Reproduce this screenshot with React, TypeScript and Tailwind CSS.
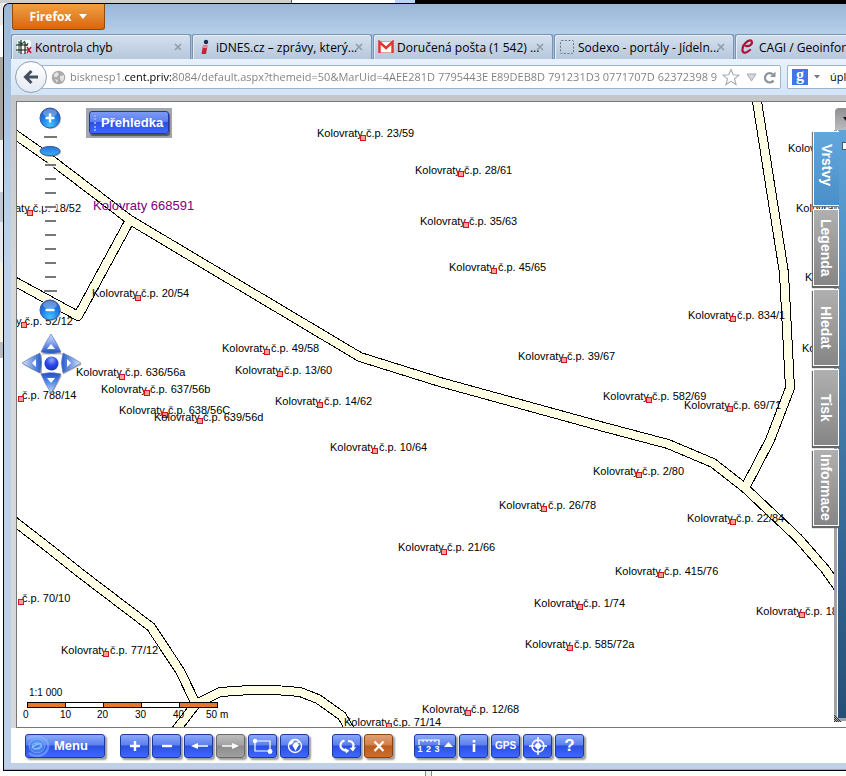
import React from "react";

const ORIGIN = { x: 17, y: 102 };

type Label = { text: string; x: number; y: number; mx?: number; my?: number };

const LABELS: Label[] = [
  { text: "Kolovraty č.p. 23/59", x: 317, y: 133, mx: 363, my: 137 },
  { text: "Kolovraty č.p. 28/61", x: 415, y: 170, mx: 461, my: 173 },
  { text: "Kolovraty č.p. 35/63", x: 420, y: 221, mx: 466, my: 224 },
  { text: "Kolovraty č.p. 45/65", x: 449, y: 267, mx: 494, my: 270 },
  { text: "Kolovraty č.p. 834/1", x: 688, y: 315, mx: 733, my: 318 },
  { text: "Kolovraty č.p. 39/67", x: 518, y: 356, mx: 564, my: 359 },
  { text: "Kolovraty č.p. 49/58", x: 222, y: 348, mx: 267, my: 351 },
  { text: "Kolovraty č.p. 13/60", x: 235, y: 370, mx: 280, my: 373 },
  { text: "Kolovraty č.p. 636/56a", x: 76, y: 372, mx: 122, my: 376 },
  { text: "Kolovraty č.p. 637/56b", x: 101, y: 389, mx: 147, my: 392 },
  { text: "Kolovraty č.p. 638/56C", x: 119, y: 410, mx: 165, my: 414 },
  { text: "Kolovraty č.p. 639/56d", x: 154, y: 417, mx: 200, my: 420 },
  { text: "Kolovraty č.p. 14/62", x: 275, y: 401, mx: 320, my: 404 },
  { text: "Kolovraty č.p. 10/64", x: 330, y: 447, mx: 375, my: 450 },
  { text: "Kolovraty č.p. 582/69", x: 603, y: 396, mx: 649, my: 399 },
  { text: "Kolovraty č.p. 69/71", x: 684, y: 405, mx: 730, my: 408 },
  { text: "Kolovraty č.p. 2/80", x: 593, y: 471, mx: 639, my: 474 },
  { text: "Kolovraty č.p. 26/78", x: 499, y: 505, mx: 544, my: 508 },
  { text: "Kolovraty č.p. 22/84", x: 687, y: 518, mx: 733, my: 521 },
  { text: "Kolovraty č.p. 21/66", x: 398, y: 547, mx: 444, my: 551 },
  { text: "Kolovraty č.p. 415/76", x: 615, y: 571, mx: 661, my: 574 },
  { text: "Kolovraty č.p. 1/74", x: 534, y: 603, mx: 580, my: 606 },
  { text: "Kolovraty č.p. 585/72a", x: 525, y: 644, mx: 570, my: 647 },
  { text: "Kolovraty č.p. 18", x: 756, y: 611, mx: 802, my: 614 },
  { text: "Kolovraty č.p. 12/68", x: 422, y: 709, mx: 468, my: 712 },
  { text: "Kolovraty č.p. 71/14", x: 344, y: 722, mx: 389, my: 725 },
  { text: "Kolovraty č.p. 77/12", x: 61, y: 650, mx: 106, my: 653 },
  { text: "Kolovraty č.p. 20/54", x: 92, y: 293, mx: 138, my: 297 },
  { text: "aty č.p. 18/52", x: 15, y: 208, mx: 30, my: 212 },
  { text: "y č.p. 52/12", x: 16, y: 321, mx: 24, my: 324 },
  { text: "č.p. 788/14", x: 22, y: 395, mx: 21, my: 398 },
  { text: "č.p. 70/10", x: 22, y: 598, mx: 21, my: 601 },
  { text: "Kolov", x: 788, y: 148 },
  { text: "Kolovrat", x: 796, y: 208 },
  { text: "Ko", x: 805, y: 277 },
  { text: "Ko", x: 802, y: 348 },
];

const ROADS = [
  "M10 131 L50 159 L130 220 L360 357 L440 382 L600 426 L668 444 L713 463 L745 488 L798 538 L825 569 L840 590",
  "M130 220 L78 316 L10 279",
  "M756 95 L784 273 L787 330 L790 388 L770 440 L745 488",
  "M10 518 L50 549 L80 573 L151 627 L180 671 L196 704 L176 730",
  "M196 704 L220 692 L250 690 L275 690 L300 692 L318 699 L342 716 L350 730",
];

const TICKS = [165, 179, 193, 207, 221, 235, 249, 263, 277];

function MapCanvas() {
  return (
    <svg
      className="absolute left-0 top-0 h-full w-full"
      width="829"
      height="626"
      shapeRendering="crispEdges"
      fill="none"
      aria-hidden="true"
    >
      <g transform={`translate(${-ORIGIN.x} ${-ORIGIN.y})`}>
        {ROADS.map((d) => (
          <path key={d} d={d} stroke="#000" strokeWidth="10" strokeLinejoin="round" />
        ))}
        {ROADS.map((d) => (
          <path key={d} d={d} stroke="#ffffe6" strokeWidth="8" strokeLinejoin="round" />
        ))}
      </g>
    </svg>
  );
}

function MapLabels() {
  return (
    <>
      {LABELS.map((l) => (
        <React.Fragment key={`${l.x}-${l.y}`}>
          <span
            className="absolute whitespace-nowrap text-[11px] leading-[14px] text-black"
            style={{ left: l.x - ORIGIN.x, top: l.y - 7 - ORIGIN.y }}
          >
            {l.text}
          </span>
          {l.mx !== undefined && l.my !== undefined && (
            <i
              className="absolute size-[6px] border border-[#d4141c] bg-[#ff9c9c]"
              style={{ left: l.mx - 3 - ORIGIN.x, top: l.my - 2 - ORIGIN.y }}
            />
          )}
        </React.Fragment>
      ))}
      <span className="absolute left-[76px] top-[96px] whitespace-nowrap text-[13px] leading-4 text-[#800080]">
        Kolovraty 668591
      </span>
    </>
  );
}

function RoundButton({ minus }: { minus?: boolean }) {
  const id = minus ? "ballMinus" : "ballPlus";
  return (
    <button type="button" aria-label={minus ? "Oddálit" : "Přiblížit"} className="block size-6">
      <svg width="24" height="24" viewBox="0 0 24 24">
        <defs>
          <radialGradient id={id} cx="0.5" cy="0.85" r="0.85">
            <stop offset="0" stopColor="#43c4ff" />
            <stop offset="0.5" stopColor="#1b83ee" />
            <stop offset="1" stopColor="#2450b8" />
          </radialGradient>
        </defs>
        <circle cx="13" cy="13" r="10" fill="#8a8a8a" opacity="0.6" />
        <circle cx="12" cy="12" r="10" fill={`url(#${id})`} stroke="#3a5a9c" strokeWidth="1" />
        <ellipse cx="12" cy="7" rx="7" ry="4" fill="#fff" opacity="0.3" />
        <path d={minus ? "M7.5 12H16.5" : "M7.5 12H16.5M12 7.5V16.5"} stroke="#fff" strokeWidth="2.4" />
      </svg>
    </button>
  );
}

function ZoomSlider() {
  return (
    <div className="absolute left-[21px] top-1 flex w-6 flex-col items-center">
      <RoundButton />
      <div className="relative h-[168px] w-6">
        <svg width="24" height="168" viewBox="0 0 24 168" className="block">
          <defs>
            <linearGradient id="thumb" x1="0" y1="0" x2="0" y2="1">
              <stop offset="0" stopColor="#2a6fd0" />
              <stop offset="1" stopColor="#35b4ff" />
            </linearGradient>
          </defs>
          {TICKS.map((y) => (
            <g key={y}>
              <path d={`M5 ${y - 130}H19`} stroke="#fff" strokeWidth="5" opacity="0.85" />
              <path d={`M7 ${y - 130}H18`} stroke="#777" strokeWidth="2" />
            </g>
          ))}
          <path d="M6 7H19M6 161H19" stroke="#777" strokeWidth="2" />
          <ellipse cx="13" cy="22" rx="10" ry="5" fill="#777" opacity="0.6" />
          <ellipse cx="12" cy="21" rx="10" ry="4.6" fill="url(#thumb)" stroke="#3c5ea4" />
        </svg>
        <input
          type="range"
          aria-label="Měřítko"
          min={0}
          max={10}
          defaultValue={9}
          className="absolute inset-0 h-full w-full cursor-pointer opacity-0 [writing-mode:vertical-lr]"
        />
      </div>
      <RoundButton minus />
    </div>
  );
}

function PanPad() {
  return (
    <button type="button" aria-label="Posun mapy" className="absolute left-1 top-[231px] block">
      <svg width="62" height="62" viewBox="0 0 62 62">
        <defs>
          <linearGradient id="padV" x1="0" y1="0" x2="0" y2="1">
            <stop offset="0" stopColor="#d5e0fb" />
            <stop offset="0.5" stopColor="#7f9df0" />
            <stop offset="1" stopColor="#1e4dbf" />
          </linearGradient>
          <linearGradient id="padD" x1="0" y1="0" x2="0" y2="1">
            <stop offset="0" stopColor="#1e4dbf" />
            <stop offset="0.5" stopColor="#5b8cf0" />
            <stop offset="1" stopColor="#d5e0fb" />
          </linearGradient>
          <linearGradient id="padL" x1="0" y1="0" x2="1" y2="0">
            <stop offset="0" stopColor="#dbe5fb" />
            <stop offset="1" stopColor="#1f5cc8" />
          </linearGradient>
          <linearGradient id="padR" x1="0" y1="0" x2="1" y2="0">
            <stop offset="0" stopColor="#1f5cc8" />
            <stop offset="1" stopColor="#dbe5fb" />
          </linearGradient>
          <radialGradient id="padC" cx="0.5" cy="0.25" r="0.8">
            <stop offset="0" stopColor="#8fa4ff" />
            <stop offset="0.5" stopColor="#2b45ea" />
            <stop offset="1" stopColor="#1a2fb0" />
          </radialGradient>
        </defs>
        <g transform="translate(1 1.5)" fill="#777" opacity="0.55">
          <path d="M30 1L40 20H20Z M30 60L40 41H20Z M1 30L20 20V40Z M60 30L41 20V40Z" />
        </g>
        <path d="M30 1Q36 10 40 19Q30 22 20 19Q24 10 30 1Z" fill="url(#padV)" stroke="#5f7cc0" strokeWidth="0.7" />
        <path d="M30 60Q36 51 40 41Q30 38 20 41Q24 51 30 60Z" fill="url(#padD)" stroke="#5f7cc0" strokeWidth="0.7" />
        <path d="M1 30Q10 24 19 20Q22 30 19 40Q10 36 1 30Z" fill="url(#padL)" stroke="#5f7cc0" strokeWidth="0.7" />
        <path d="M60 30Q51 24 42 20Q39 30 42 40Q51 36 60 30Z" fill="url(#padR)" stroke="#5f7cc0" strokeWidth="0.7" />
        <path d="M30 11L34 16H26Z M30 50L34 45H26Z M11 30L15 26V34Z M50 30L46 26V34Z" fill="#fff" />
        <circle cx="30.5" cy="30.5" r="9" fill="#fff" opacity="0.8" />
        <circle cx="30.5" cy="30.5" r="7" fill="url(#padC)" />
      </svg>
    </button>
  );
}

function ScaleBar() {
  return (
    <div className="absolute bottom-1.5 left-[6px] w-[206px] text-[10px] leading-3 text-black">
      <div className="pl-1.5">1:1 000</div>
      <div className="mt-[3px] ml-1 flex h-1.5 w-[191px] border border-black bg-white">
        <div className="flex-1 border-r border-black bg-[#e07830]" />
        <div className="flex-1 border-r border-black" />
        <div className="flex-1 border-r border-black bg-[#e07830]" />
        <div className="flex-1 border-r border-black" />
        <div className="flex-1 bg-[#e07830]" />
      </div>
      <div className="mt-px flex">
        <span className="w-[37px]">0</span>
        <span className="w-[37px]">10</span>
        <span className="w-[38px]">20</span>
        <span className="w-[38px]">30</span>
        <span className="w-[33px]">40</span>
        <span className="whitespace-nowrap">50 m</span>
      </div>
    </div>
  );
}

function SideTab({ name, active }: { name: string; active?: boolean }) {
  return (
    <button
      type="button"
      className={
        active
          ? "z-10 flex h-[75px] w-[26px] items-start justify-center self-start border border-r-0 border-white bg-linear-to-b from-[#62a7dc] to-[#4b8fc8] pt-3 text-sm leading-4 font-bold text-white shadow-[-1px_1px_1px_#777] [writing-mode:vertical-rl]"
          : "flex h-[77px] w-[26px] items-center justify-center border border-white bg-linear-to-b from-[#b0b0b0] to-[#868686] text-sm leading-4 font-bold text-white shadow-[-1px_2px_1px_#666] [writing-mode:vertical-rl]"
      }
    >
      {active ? <span className="flex h-full w-full items-center">{name}</span> : name}
    </button>
  );
}

function SidePanel() {
  return (
    <>
      <div className="absolute top-1.5 right-0 flex h-[22px] w-[11px] items-center justify-end rounded-tl-sm bg-linear-to-b from-[#8e8e93] to-[#bcbcc0]">
        <svg width="3" height="4" viewBox="0 0 3 4">
          <path d="M0 0H3V4Z" fill="#111" />
        </svg>
      </div>
      <div className="absolute top-7 right-0 bottom-[9px] w-3 border-l-3 border-[#a0a2a8] bg-white pl-px shadow-[0_3px_0_#a0a2a8]">
        <div className="h-full bg-linear-to-b from-[#5fa4da] to-[#235078]">
          <div className="flex justify-end pt-3">
            <i className="h-2 w-1 border border-r-0 border-[#555] bg-white" />
          </div>
        </div>
      </div>
      <div className="absolute right-1 bottom-[5px] size-2 bg-[repeating-conic-gradient(#333_0_25%,#aaa_0_50%)] bg-size-[2px_2px] [clip-path:polygon(0_0,100%_100%,0_100%)]" />
      <nav className="absolute top-[29px] right-[7px] flex flex-col gap-[3px]">
        <SideTab name="Vrstvy" active />
        <SideTab name="Legenda" />
        <SideTab name="Hledat" />
        <SideTab name="Tisk" />
        <SideTab name="Informace" />
      </nav>
    </>
  );
}

const BLUE =
  "flex h-6 shrink-0 items-center justify-center rounded-[3px] border border-[#1c3a9c] bg-[linear-gradient(180deg,#8ba8f8_0%,#5d80ee_45%,#2a50e0_50%,#3f68ff_100%)] text-white shadow-[2px_2px_2px_#999]";

function ToolButton({ label, className, children }: { label: string; className?: string; children: React.ReactNode }) {
  return (
    <button type="button" aria-label={label} className={`${BLUE} ${className ?? "w-[29px]"}`}>
      {children}
    </button>
  );
}

function Glyph({ children }: { children: React.ReactNode }) {
  return (
    <svg width="22" height="18" viewBox="0 0 22 18" fill="none" stroke="#fff" strokeWidth="2">
      {children}
    </svg>
  );
}

function BottomToolbar() {
  return (
    <div className="flex h-[35px] shrink-0 items-start gap-[3px] bg-white pt-1.5 pl-3.5">
      <button type="button" className={`${BLUE} mr-3 w-20 justify-start`}>
        <svg width="24" height="22" viewBox="0 0 24 22" fill="none" stroke="#8fc0ff" aria-hidden="true">
          <path d="M2 4Q11-2 20 5Q25 11 19 18Q11 24 3 18" strokeWidth="2.5" opacity="0.5" />
          <ellipse cx="11" cy="11" rx="8" ry="7" fill="#4d92f2" opacity="0.7" />
          <ellipse cx="11" cy="11" rx="4.5" ry="3" />
          <path d="M6 13Q10 8 16 9M7 14Q13 14 16 10" strokeWidth="1.2" />
        </svg>
        <span className="ml-1 text-[13px] leading-4 font-bold">Menu</span>
      </button>
      <ToolButton label="Přiblížit">
        <Glyph>
          <path d="M6 9H16M11 4V14" strokeWidth="2.4" />
        </Glyph>
      </ToolButton>
      <ToolButton label="Oddálit">
        <Glyph>
          <path d="M6 9H16" strokeWidth="2.4" />
        </Glyph>
      </ToolButton>
      <ToolButton label="Předchozí pohled">
        <Glyph>
          <path d="M8 9H20" strokeWidth="1.5" />
          <path d="M3 9L10 6V12Z" fill="#fff" stroke="none" />
        </Glyph>
      </ToolButton>
      <button
        type="button"
        aria-label="Další pohled"
        className="flex h-6 w-[29px] shrink-0 items-center justify-center rounded-[3px] border border-[#6a6a6a] bg-[linear-gradient(180deg,#bcbcbc_0%,#a4a4a4_45%,#8c8c8c_50%,#a0a0a0_100%)] shadow-[2px_2px_2px_#999]"
      >
        <Glyph>
          <path d="M2 9H14" strokeWidth="1.5" />
          <path d="M19 9L12 6V12Z" fill="#fff" stroke="none" />
        </Glyph>
      </button>
      <ToolButton label="Výřez">
        <Glyph>
          <path d="M3 4H18V14H3Z" strokeWidth="1.2" />
          <circle cx="3" cy="4" r="2.2" fill="#fff" stroke="none" />
          <circle cx="18" cy="14.500" r="2.4" fill="#fff" stroke="none" />
        </Glyph>
      </ToolButton>
      <ToolButton label="Celá mapa">
        <Glyph>
          <circle cx="11" cy="9" r="6.5" strokeWidth="1.4" />
          <path d="M5 6Q8 2 10 3L9 6L6 8Z M10 6L13 5L15 8L13 11L11.500 14L10 11L8.500 9Z M13 3L16 6L14 6Z" fill="#fff" stroke="none" />
        </Glyph>
      </ToolButton>
      <div className="w-[17px] shrink-0" />
      <ToolButton label="Obnovit">
        <Glyph>
          <path d="M8.500 3.500Q4 5 4.500 9.500Q6 13.500 11 13.500M12 4Q17 4 17.500 8Q17.500 10 16.500 11.500" strokeWidth="2.2" />
          <path d="M9 11L13.500 13.500L10 16.500Z M13.500 11L20 10L17 14.500Z" fill="#fff" stroke="none" />
        </Glyph>
      </ToolButton>
      <button
        type="button"
        aria-label="Zrušit"
        className="flex h-6 w-[29px] shrink-0 items-center justify-center rounded-[3px] border border-[#8a4212] bg-[linear-gradient(180deg,#e0a076_0%,#cf8048_45%,#bb5c1c_50%,#cf6c28_100%)] shadow-[2px_2px_2px_#999]"
      >
        <Glyph>
          <path d="M6.500 4.500L15.500 14M15.500 4.500L6.500 14" strokeWidth="2.300" />
        </Glyph>
      </button>
      <div className="w-[15px] shrink-0" />
      <ToolButton label="Měření" className="w-[42px] gap-1">
        <span className="flex flex-col">
          <svg width="22" height="6" viewBox="0 0 22 6" fill="none" stroke="#fff" strokeWidth="1.2">
            <path d="M1 6V1H21V6M5 1V3M9 1V3M13 1V3M17 1V3" />
          </svg>
          <span className="flex justify-between text-[9px] leading-[9px] font-bold">
            <span>1</span>
            <span>2</span>
            <span>3</span>
          </span>
        </span>
        <svg width="9" height="8" viewBox="0 0 9 8">
          <path d="M0 5L4.500 0L9 5Z" fill="#fff" />
        </svg>
      </ToolButton>
      <ToolButton label="Informace o prvku">
        <Glyph>
          <path d="M11 7V15" strokeWidth="2.600" />
          <path d="M11 3V5.500" strokeWidth="2.600" />
        </Glyph>
      </ToolButton>
      <ToolButton label="Poloha GPS">
        <span className="text-[10px] leading-3 font-bold">GPS</span>
      </ToolButton>
      <ToolButton label="Zaměřit">
        <Glyph>
          <circle cx="11" cy="9" r="6" strokeWidth="1.500" />
          <path d="M11 0V5M11 13V18M2 9H7M15 9H20" strokeWidth="1.500" />
          <path d="M11 5L15 9L11 13L7 9Z" fill="#fff" stroke="none" />
        </Glyph>
      </ToolButton>
      <ToolButton label="Nápověda">
        <span className="text-[17px] leading-5 font-bold">?</span>
      </ToolButton>
    </div>
  );
}

function GridIcon() {
  return (
    <svg width="16" height="16" viewBox="0 0 16 16" fill="none">
      <rect x="1" y="1" width="14" height="13" rx="3" fill="#fff" />
      <path d="M3 14V3L6 5L9 2M10 7L12 4" stroke="#2c7a3c" strokeWidth="1.300" />
      <path d="M0 6H12M0 11H12M5 1V15M9 3V15" stroke="#111" strokeWidth="1.100" />
      <path d="M11 8L15 14M15 8L11 14" stroke="#b5203a" strokeWidth="1.600" />
    </svg>
  );
}

function IdnesIcon() {
  return (
    <svg width="16" height="16" viewBox="0 0 16 16">
      <circle cx="9" cy="3" r="2.200" fill="#1d2a50" />
      <path d="M6 6.500H10.500L9 15H4.500Z" fill="#cf2038" />
      <path d="M6 6.500H10.500L10 9H5.500Z" fill="#e58a90" />
    </svg>
  );
}

function GmailIcon() {
  return (
    <svg width="16" height="14" viewBox="0 0 16 14">
      <rect x="0.500" y="1.500" width="15" height="11" fill="#fff" stroke="#e0a0a0" />
      <path d="M1.500 13V2L8 8L14.500 2V13" fill="none" stroke="#dd3a32" strokeWidth="2.400" />
    </svg>
  );
}

function DottedIcon() {
  return (
    <svg width="16" height="16" viewBox="0 0 16 16">
      <rect x="1.500" y="1.500" width="13" height="13" rx="1" fill="none" stroke="#6b7785" strokeDasharray="2 1.500" />
    </svg>
  );
}

function CagiIcon() {
  return (
    <svg width="15" height="16" viewBox="0 0 15 16" fill="none" stroke="#b01038" strokeLinecap="round">
      <path d="M6 7Q10 8 12 4Q12 0 8 2Q2 6 2.500 12Q4 16 10 11" strokeWidth="2.200" />
    </svg>
  );
}

function BrowserTab({ icon, title }: { icon: React.ReactNode; title: string }) {
  return (
    <div className="flex h-[25px] w-[180px] shrink-0 items-center rounded-t-[3px] border border-b-0 border-[#7b93ae] bg-linear-to-b from-[#d3e0ef] to-[#b7c8db] pr-1 pl-1 shadow-[inset_1px_1px_0_#e4eef8]">
      <span className="flex w-[19px] shrink-0 items-center">{icon}</span>
      <button type="button" className="min-w-0 flex-1 pt-0.5 text-left text-xs leading-4 whitespace-nowrap text-black">
        {title}
      </button>
      <button type="button" aria-label="Zavřít panel" className="py-1 pr-1">
        <svg width="8" height="8" viewBox="0 0 8 8" stroke="#8f9caa" strokeWidth="1.600">
          <path d="M1 1L7 7M7 1L1 7" />
        </svg>
      </button>
    </div>
  );
}

function TabStrip() {
  return (
    <div className="flex h-[25px] shrink-0 gap-px border-b border-[#8fa6c0] font-['Open_Sans','Noto_Sans',sans-serif]">
      <BrowserTab icon={<GridIcon />} title="Kontrola chyb" />
      <BrowserTab icon={<IdnesIcon />} title="iDNES.cz – zprávy, který..." />
      <BrowserTab icon={<GmailIcon />} title="Doručená pošta (1 542) ..." />
      <BrowserTab icon={<DottedIcon />} title="Sodexo - portály - Jídeln..." />
      <BrowserTab icon={<CagiIcon />} title="CAGI / Geoinforn" />
    </div>
  );
}

function AddressBar() {
  return (
    <div className="flex h-9 shrink-0 items-center bg-linear-to-b from-[#e9f2fc] to-[#d3e4f7] pl-1">
      <button
        type="button"
        aria-label="Zpět"
        className="z-10 flex size-8 shrink-0 items-center justify-center rounded-full border border-[#8f9fb2] bg-linear-to-b from-white to-[#e4ebf3]"
      >
        <svg width="16" height="16" viewBox="0 0 16 16" fill="none" stroke="#44505e" strokeWidth="3">
          <path d="M15 8H3M8.500 2L2.500 8L8.500 14" />
        </svg>
      </button>
      <div className="-ml-2 flex h-6 min-w-0 flex-1 items-center rounded-[2px] border border-[#9fb3ca] bg-white pr-1 pl-[11px]">
        <svg width="15" height="15" viewBox="0 0 15 15" className="shrink-0">
          <circle cx="7.500" cy="7.500" r="6.800" fill="#a9a9a9" />
          <path d="M3 4L6 2L8 4L6 7L3 7ZM9 6L13 5L13 9L11 12L9 9ZM4 9L7 10L6 13Z" fill="#e2e2e2" />
        </svg>
        <input
          type="text"
          aria-label="Adresa"
          defaultValue="bisknesp1.cent.priv:8084/default.aspx?themeid=50&MarUid=4AEE281D 7795443E E89DEB8D 791231D3 0771707D 62372398 9"
          className="ml-1 min-w-0 flex-1 bg-[linear-gradient(90deg,#7d7d7d_55px,#000_55px,#000_103px,#7d7d7d_103px)] bg-clip-text font-['Open_Sans','Noto_Sans',sans-serif] text-[11px] leading-4 text-transparent outline-none"
        />
        <button type="button" aria-label="Přidat do záložek" className="shrink-0">
          <svg width="18" height="18" viewBox="0 0 18 18" fill="#fff" stroke="#a4abb3" strokeWidth="1.100">
            <path d="M9 1.500L11.200 6.800L17 7.200L12.500 10.900L14 16.500L9 13.400L4 16.500L5.500 10.900L1 7.200L6.800 6.800Z" />
          </svg>
        </button>
        <button type="button" aria-label="Historie" className="ml-1.5 shrink-0">
          <svg width="11" height="9" viewBox="0 0 11 9" fill="#d5d9de" stroke="#a4abb3">
            <path d="M1 1H10L5.500 8Z" />
          </svg>
        </button>
        <button type="button" aria-label="Načíst znovu" className="ml-1.5 shrink-0">
          <svg width="13" height="13" viewBox="0 0 13 13">
            <path d="M10.500 9.500A4.700 4.700 0 1 1 10 3.500" fill="none" stroke="#8b939c" strokeWidth="2.200" />
            <path d="M12.500 0.500V6H7Z" fill="#8b939c" />
          </svg>
        </button>
      </div>
      <div className="ml-1.5 flex h-6 w-[59px] shrink-0 items-center overflow-hidden rounded-l-[2px] border border-r-0 border-[#9fb3ca] bg-white pl-1">
        <span className="flex size-4 shrink-0 items-center justify-center bg-[#4475e8] pb-1 font-['Liberation_Serif',serif] text-base leading-4 font-bold text-white">
          g
        </span>
        <svg width="6" height="4" viewBox="0 0 6 4" className="mx-1.5 shrink-0">
          <path d="M0 0H6L3 3.500Z" fill="#777" />
        </svg>
        <input
          type="text"
          aria-label="Hledat"
          defaultValue="úpln"
          className="ml-1 w-8 min-w-0 font-['Open_Sans','Noto_Sans',sans-serif] text-[11px] leading-4 text-black outline-none"
        />
      </div>
    </div>
  );
}

export default function App() {
  return (
    <div className="flex h-screen min-h-[640px] flex-col overflow-hidden bg-white font-['Liberation_Sans',Arial,sans-serif]">
      <div className="flex h-[3px] shrink-0">
        <div className="w-[291px] bg-[#cfcfcd]" />
        <div className="w-[104px] border-l border-[#555] bg-white" />
        <div className="w-5 bg-[#bcd4f4]" />
        <div className="flex-1 bg-black" />
      </div>
      <div className="flex min-h-0 flex-1">
        <div className="flex w-[3px] shrink-0 flex-col">
          <div className="h-[22px] bg-[#e8e8e8]" />
          <div className="h-8 bg-[#fafafa]" />
          <div className="h-[83px] bg-[#aaa49e]" />
          <div className="h-[52px] bg-[#f4f4f4]" />
          <div className="h-[30px] bg-[#c3cad4]" />
          <div className="h-10 bg-[#e6e9ee]" />
          <div className="h-20 bg-[#f6f2e4]" />
          <div className="h-4 bg-[#b9bdc2]" />
          <div className="flex-1 bg-white" />
        </div>
        <div className="flex min-w-0 flex-1 flex-col overflow-hidden rounded-tl-md border-t border-b border-l border-black bg-linear-to-b from-[#9bb8d8] via-[#bcd2ea] via-30% to-[#bed0e8]">
          <div className="flex min-h-0 flex-1 flex-col border-b border-[#4cc8e8] pl-[7px]">
            <header className="flex h-[30px] shrink-0 items-start bg-linear-to-b from-[#9ab7d7] to-[#b6cfe9] pl-px">
              <button
                type="button"
                className="flex h-[26px] w-[93px] items-center justify-center gap-2 rounded-b-[3px] border border-t-0 border-[#8c4a10] bg-linear-to-b from-[#f0a040] to-[#d8660c] font-['Open_Sans','Noto_Sans',sans-serif] text-xs leading-4 font-bold text-white"
              >
                Firefox
                <svg width="8" height="5" viewBox="0 0 8 5">
                  <path d="M0 0H8L4 5Z" fill="#fff" />
                </svg>
              </button>
            </header>
            <TabStrip />
            <AddressBar />
            <main className="flex min-h-0 flex-1 flex-col bg-white">
              <div className="flex min-h-0 flex-1 bg-[linear-gradient(#c4c6ca,#d6d8dc_30%)] pt-1.5 pl-[5px]">
                <section
                  aria-label="Mapa"
                  className="relative min-w-0 flex-1 overflow-hidden border border-r-0 border-[#777] bg-white"
                >
                  <MapCanvas />
                  <MapLabels />
                  <ZoomSlider />
                  <PanPad />
                  <div className="absolute top-1.5 left-[69px] bg-[#a3a6b0] px-[3px] pt-[3px] pb-1">
                    <button
                      type="button"
                      className="flex h-[23px] w-20 items-center rounded-[3px] border border-[#1c3a9c] bg-[linear-gradient(180deg,#7c9af4_0%,#5d80ee_45%,#2a50e0_50%,#3f68ff_100%)] pl-1 text-[13px] leading-4 font-bold text-white shadow-[1px_2px_1px_#555]"
                    >
                      <i className="mr-[5px] h-4 w-0.5 border-l-2 border-dotted border-[#8aa8ff]" />
                      Přehledka
                    </button>
                  </div>
                  <ScaleBar />
                  <SidePanel />
                </section>
              </div>
              <BottomToolbar />
            </main>
            <div className="h-1.5 shrink-0 bg-[#c0d0e8]" />
          </div>
        </div>
      </div>
      <div className="flex h-[5px] shrink-0 pl-[425px]">
        <div className="w-[7px] border-x border-[#888] bg-[#eee]" />
      </div>
    </div>
  );
}
